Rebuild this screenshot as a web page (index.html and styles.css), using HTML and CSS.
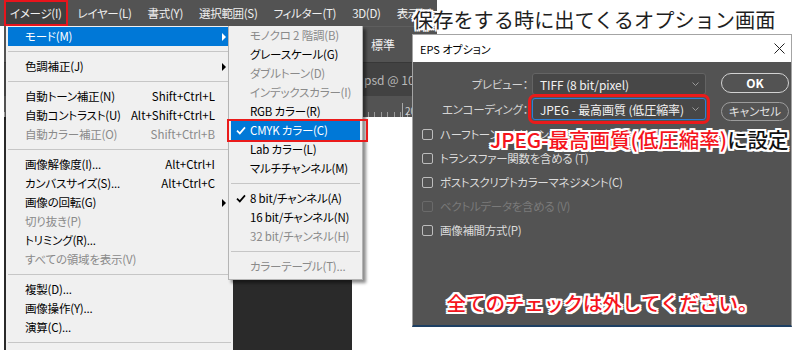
FILE: index.html
```html
<!DOCTYPE html>
<html lang="ja">
<head>
  <meta charset="UTF-8">
  <title>EPS オプション</title>
  <link rel="stylesheet" href="styles.css">
</head>
<body>
  <div class="shot">
    <div class="ps">
      <div class="menubar">
        <span class="mb-item active">イメージ(I)</span>
        <span class="mb-item">レイヤー(L)</span>
        <span class="mb-item">書式(Y)</span>
        <span class="mb-item">選択範囲(S)</span>
        <span class="mb-item">フィルター(T)</span>
        <span class="mb-item">3D(D)</span>
        <span class="mb-item">表示(V)</span>
      </div>

      <div class="workspace">
        <div class="optbar"><span>標準</span></div>
        <div class="tabbar"><span>psd @ 100% (RGB/8)</span></div>
        <div class="ruler"><span class="ruler-mark">20</span></div>
        <div class="stage">
          <div class="pasteboard"></div>
          <div class="canvas"></div>
        </div>
      </div>

      <ul class="menu main-menu">
        <li class="mi hl"><span class="label">モード(M)</span><span class="more"><i class="arrow"></i></span></li>
        <li class="sep"></li>
        <li class="mi"><span class="label">色調補正(J)</span><span class="more"><i class="arrow"></i></span></li>
        <li class="sep"></li>
        <li class="mi"><span class="label">自動トーン補正(N)</span><span class="key">Shift+Ctrl+L</span><span class="more"></span></li>
        <li class="mi"><span class="label">自動コントラスト(U)</span><span class="key">Alt+Shift+Ctrl+L</span><span class="more"></span></li>
        <li class="mi off"><span class="label">自動カラー補正(O)</span><span class="key">Shift+Ctrl+B</span><span class="more"></span></li>
        <li class="sep"></li>
        <li class="mi"><span class="label">画像解像度(I)...</span><span class="key">Alt+Ctrl+I</span><span class="more"></span></li>
        <li class="mi"><span class="label">カンバスサイズ(S)...</span><span class="key">Alt+Ctrl+C</span><span class="more"></span></li>
        <li class="mi"><span class="label">画像の回転(G)</span><span class="more"><i class="arrow"></i></span></li>
        <li class="mi off"><span class="label">切り抜き(P)</span><span class="more"></span></li>
        <li class="mi"><span class="label">トリミング(R)...</span><span class="more"></span></li>
        <li class="mi off"><span class="label">すべての領域を表示(V)</span><span class="more"></span></li>
        <li class="sep"></li>
        <li class="mi"><span class="label">複製(D)...</span><span class="more"></span></li>
        <li class="mi"><span class="label">画像操作(Y)...</span><span class="more"></span></li>
        <li class="mi"><span class="label">演算(C)...</span><span class="more"></span></li>
        <li class="sep"></li>
      </ul>

      <ul class="menu sub-menu">
        <li class="mi off"><span class="check"></span><span class="label">モノクロ 2 階調(B)</span></li>
        <li class="mi"><span class="check"></span><span class="label">グレースケール(G)</span></li>
        <li class="mi off"><span class="check"></span><span class="label">ダブルトーン(D)</span></li>
        <li class="mi off"><span class="check"></span><span class="label">インデックスカラー(I)</span></li>
        <li class="mi"><span class="check"></span><span class="label">RGB カラー(R)</span></li>
        <li class="mi hl marked"><span class="check"><svg width="10" height="9" viewBox="0 0 10 9"><path d="M1 4.6 L3.8 7.4 L9 1.4" fill="none" stroke="currentColor" stroke-width="1.7"/></svg></span><span class="label">CMYK カラー(C)</span></li>
        <li class="mi"><span class="check"></span><span class="label">Lab カラー(L)</span></li>
        <li class="mi"><span class="check"></span><span class="label">マルチチャンネル(M)</span></li>
        <li class="sep"></li>
        <li class="mi"><span class="check"><svg width="10" height="9" viewBox="0 0 10 9"><path d="M1 4.6 L3.8 7.4 L9 1.4" fill="none" stroke="currentColor" stroke-width="1.7"/></svg></span><span class="label">8 bit/チャンネル(A)</span></li>
        <li class="mi"><span class="check"></span><span class="label">16 bit/チャンネル(N)</span></li>
        <li class="mi off"><span class="check"></span><span class="label">32 bit/チャンネル(H)</span></li>
        <li class="sep"></li>
        <li class="mi off"><span class="check"></span><span class="label">カラーテーブル(T)...</span></li>
      </ul>
    </div>

    <div class="side">
      <h1 class="caption">保存をする時に出てくるオプション画面</h1>
      <div class="dialog">
        <div class="titlebar">
          <span>EPS オプション</span>
          <svg class="close" width="11" height="11" viewBox="0 0 11 11"><path d="M0.5 0.5 L10.5 10.5 M10.5 0.5 L0.5 10.5" stroke="#222" stroke-width="1"/></svg>
        </div>
        <div class="dlg-body">
          <div class="dlg-top">
            <div class="fields">
              <label class="field-label">プレビュー：</label>
              <div class="select"><span>TIFF (8 bit/pixel)</span><svg width="7" height="4" viewBox="0 0 7 4"><path d="M0.5 0.5 L3.5 3.5 L6.5 0.5" fill="none" stroke="#9a9a9a"/></svg></div>
              <label class="field-label">エンコーディング：</label>
              <div class="select focused"><span>JPEG - 最高画質 (低圧縮率)</span><svg width="7" height="4" viewBox="0 0 7 4"><path d="M0.5 0.5 L3.5 3.5 L6.5 0.5" fill="none" stroke="#9a9a9a"/></svg></div>
            </div>
            <div class="buttons">
              <button class="btn primary">OK</button>
              <button class="btn">キャンセル</button>
            </div>
          </div>

          <ul class="checks">
            <li><span class="box"></span>ハーフトーンスクリーンを含める (H)</li>
            <li><span class="box"></span>トランスファー関数を含める (T)</li>
            <li><span class="box"></span>ポストスクリプトカラーマネジメント(C)</li>
            <li class="disabled"><span class="box"></span>ベクトルデータを含める (V)</li>
            <li><span class="box"></span>画像補間方式(P)</li>
          </ul>

          <p class="note note-set"><span class="red">JPEG-最高画質(低圧縮率)</span>に設定</p>
          <p class="note note-bottom"><span class="red">全てのチェックは外してください。</span></p>
        </div>
      </div>
    </div>
  </div>
</body>
</html>
```

FILE: styles.css
```css
body {
  margin: 0;
  background: #fff;
  font-family: "Noto Sans CJK JP", "Noto Sans", sans-serif;
}

.shot {
  display: grid;
  grid-template-columns: 412px 25px 363px;
  width: 800px;
  height: 360px;
}

/* ---- photoshop screenshot ---- */

.ps {
  grid-column: 1 / 3;
  grid-row: 1;
  position: relative;
  height: 350px;
  display: flex;
  flex-direction: column;
  overflow: hidden;
}

.menubar {
  height: 26px;
  flex: none;
  background: #535353;
  display: flex;
  gap: 6px;
  padding-left: 5px;
  overflow: hidden;
}

.mb-item {
  height: 24px;
  margin-top: 1px;
  line-height: 24px;
  padding: 0 5px;
  color: #f0f0f0;
  font-size: 11.5px;
  letter-spacing: -0.3px;
  font-feature-settings: "palt";
  white-space: nowrap;
}

.mb-item.active {
  background: #404040;
  outline: 2px solid #e8141c;
  outline-offset: -1px;
}

.workspace {
  flex: 1;
  margin-left: 4px;
  display: flex;
  flex-direction: column;
  background: #2a2a2a;
}

.optbar {
  height: 36px;
  flex: none;
  background: #535353;
  border-top: 1px solid #5e5e5e;
  box-sizing: border-box;
  display: flex;
  align-items: center;
  justify-content: flex-end;
  padding-right: 42px;
  color: #f0f0f0;
  font-size: 12px;
}

.tabbar {
  height: 34px;
  flex: none;
  background: #424242;
  border-top: 1px solid #383838;
  box-sizing: border-box;
  display: flex;
  align-items: center;
  padding-left: 360px;
  color: #b8b8b8;
  font-size: 12px;
  white-space: nowrap;
  overflow: hidden;
}

.ruler {
  height: 21px;
  flex: none;
  background: #535353 repeating-linear-gradient(to right, #9a9a9a 0 1px, transparent 1px 6.5px) left bottom / 100% 5px no-repeat;
  padding-left: 398px;
  box-sizing: border-box;
}

.ruler-mark {
  display: inline-block;
  height: 21px;
  border-left: 1px solid #a8a8a8;
  padding-left: 2px;
  color: #cfcfcf;
  font-size: 10px;
  line-height: 16px;
}

.stage {
  flex: 1;
  display: flex;
}

.pasteboard {
  width: 348px;
  background: #2a2a2a;
  border-top: 3px solid #1e1e1e;
}

.canvas {
  flex: 1;
  background: #fff;
}

/* ---- menus ---- */

.menu {
  list-style: none;
  margin: 0;
  position: absolute;
  top: 26px;
  background: #f0f0f0;
  color: #000;
  font-size: 11.5px;
  letter-spacing: -0.2px;
  font-feature-settings: "palt";
  box-sizing: border-box;
}

.main-menu {
  left: 6px;
  width: 227px;
  height: 324px;
  padding: 1px 0 0;
}

.sub-menu {
  left: 228px;
  width: 135px;
  padding: 0 0 3px;
  border: 1px solid #b4b4b4;
  border-top: none;
  box-shadow: 3px 3px 3px rgba(0, 0, 0, 0.45);
}

.mi {
  position: relative;
  height: 19px;
  line-height: 19px;
  margin: 0 2px;
  display: flex;
  align-items: center;
  white-space: nowrap;
}

.main-menu .mi {
  padding-left: 17px;
  padding-right: 4px;
}

.sub-menu .mi {
  padding-left: 5px;
}

.mi .label {
  flex: 1;
}

.mi .key {
  letter-spacing: 0;
}

.mi .more {
  width: 12px;
  flex: none;
  display: flex;
  padding-left: 7px;
  box-sizing: border-box;
}

.arrow {
  width: 0;
  height: 0;
  border-left: 4px solid currentColor;
  border-top: 4px solid transparent;
  border-bottom: 4px solid transparent;
}

.mi .check {
  width: 14px;
  flex: none;
  display: flex;
  align-items: center;
}

.mi.hl {
  background: #0078d7;
  color: #fff;
}

.mi.off {
  color: #8a8a8a;
}

.mi.marked::after {
  content: "";
  position: absolute;
  left: -4px;
  right: -8px;
  top: -2px;
  bottom: -2px;
  border: 2.5px solid #ea1b1b;
}

.sep {
  height: 1px;
  background: #c6c6c6;
  margin: 5px 2px;
}

/* ---- right side ---- */

.side {
  grid-column: 2 / 4;
  grid-row: 1;
  z-index: 1;
  display: flex;
  flex-direction: column;
}

.caption {
  margin: 0;
  height: 34px;
  padding-left: 1px;
  font-size: 20.2px;
  font-weight: 400;
  line-height: 40px;
  color: #1e1e1e;
  white-space: nowrap;
  text-shadow:
    -2px -2px 0 #fff, 0 -2px 0 #fff, 2px -2px 0 #fff, 2px 0 0 #fff,
    2px 2px 0 #fff, 0 2px 0 #fff, -2px 2px 0 #fff, -2px 0 0 #fff;
}

.dialog {
  width: 380px;
  height: 293px;
  display: flex;
  flex-direction: column;
  border: 1px solid #a4a4a4;
  border-bottom: 2px solid #1d3f63;
  box-sizing: border-box;
}

.titlebar {
  height: 27px;
  flex: none;
  background: #fff;
  display: flex;
  align-items: center;
  justify-content: space-between;
  padding: 0 6px 0 7px;
  font-size: 11px;
  font-feature-settings: "palt";
  color: #000;
}

.dlg-body {
  flex: 1;
  position: relative;
  background: #535353;
  display: flex;
  flex-direction: column;
  padding-top: 11px;
  font-size: 11.5px;
  letter-spacing: -0.3px;
  font-feature-settings: "palt";
  color: #dcdcdc;
}

.dlg-top {
  height: 48px;
  display: flex;
}

.fields {
  display: grid;
  grid-template-columns: 119px 174px;
  row-gap: 3px;
  align-items: center;
  align-content: start;
}

.field-label {
  text-align: right;
  padding-right: 4px;
  white-space: nowrap;
  color: #d4d4d4;
}

.select {
  height: 22px;
  box-sizing: border-box;
  background: #474747;
  border: 1px solid #646464;
  border-radius: 3px;
  padding: 0 6px 0 7px;
  display: flex;
  align-items: center;
  justify-content: space-between;
  color: #f2f2f2;
  font-size: 12px;
  letter-spacing: -0.1px;
  white-space: nowrap;
}

.select.focused {
  border-color: #2d7fd8;
  outline: 3px solid #ea1b1b;
  outline-offset: 1px;
}

.buttons {
  margin-left: 15px;
  display: flex;
  flex-direction: column;
  gap: 9px;
}

.btn {
  width: 68px;
  height: 22px;
  border-radius: 11px;
  border: 1px solid #9c9c9c;
  background: transparent;
  color: #e2e2e2;
  font: inherit;
  padding: 0;
}

.btn.primary {
  border-color: #d2d2d2;
  color: #fff;
  font-weight: 700;
  font-size: 12px;
}

.checks {
  list-style: none;
  margin: 1px 0 0;
  padding: 0 0 0 9px;
}

.checks li {
  height: 24px;
  display: flex;
  align-items: center;
  gap: 7px;
  white-space: nowrap;
}

.box {
  width: 11px;
  height: 11px;
  box-sizing: border-box;
  border: 1px solid #bcbcbc;
  border-radius: 2px;
}

.checks li.disabled {
  color: #7a7a7a;
}

.checks li.disabled .box {
  border-color: #6a6a6a;
}

/* ---- annotations ---- */

.note {
  margin: 0;
  font-weight: 500;
  white-space: nowrap;
  letter-spacing: 0;
  font-feature-settings: normal;
  color: #111;
  text-shadow:
    -2px -2px 0 #fff, 0 -2px 0 #fff, 2px -2px 0 #fff, 2px 0 0 #fff,
    2px 2px 0 #fff, 0 2px 0 #fff, -2px 2px 0 #fff, -2px 0 0 #fff,
    -1px -2px 0 #fff, 1px -2px 0 #fff, -1px 2px 0 #fff, 1px 2px 0 #fff;
}

.note .red {
  color: #f5141c;
}

.note-set {
  position: absolute;
  left: 77px;
  top: 65px;
  font-size: 20.5px;
  line-height: 24px;
}

.note-bottom {
  margin-top: auto;
  padding-bottom: 10px;
  text-align: center;
  font-size: 19.5px;
  line-height: 24px;
}
```
